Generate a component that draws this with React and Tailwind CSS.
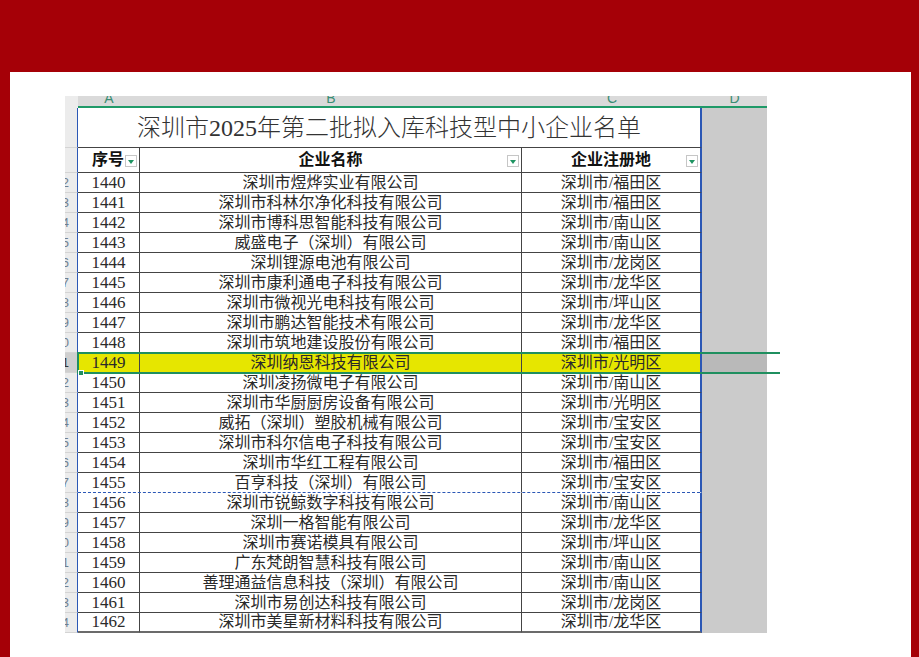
import React from 'react';

const rows = [
  [1440, '深圳市煜烨实业有限公司', '深圳市/福田区'],
  [1441, '深圳市科林尔净化科技有限公司', '深圳市/福田区'],
  [1442, '深圳市博科思智能科技有限公司', '深圳市/南山区'],
  [1443, '威盛电子（深圳）有限公司', '深圳市/南山区'],
  [1444, '深圳锂源电池有限公司', '深圳市/龙岗区'],
  [1445, '深圳市康利通电子科技有限公司', '深圳市/龙华区'],
  [1446, '深圳市微视光电科技有限公司', '深圳市/坪山区'],
  [1447, '深圳市鹏达智能技术有限公司', '深圳市/龙华区'],
  [1448, '深圳市筑地建设股份有限公司', '深圳市/福田区'],
  [1449, '深圳纳恩科技有限公司', '深圳市/光明区'],
  [1450, '深圳凌扬微电子有限公司', '深圳市/南山区'],
  [1451, '深圳市华厨厨房设备有限公司', '深圳市/光明区'],
  [1452, '威拓（深圳）塑胶机械有限公司', '深圳市/宝安区'],
  [1453, '深圳市科尔信电子科技有限公司', '深圳市/宝安区'],
  [1454, '深圳市华红工程有限公司', '深圳市/福田区'],
  [1455, '百亨科技（深圳）有限公司', '深圳市/宝安区'],
  [1456, '深圳市锐鲸数字科技有限公司', '深圳市/南山区'],
  [1457, '深圳一格智能有限公司', '深圳市/龙华区'],
  [1458, '深圳市赛诺模具有限公司', '深圳市/坪山区'],
  [1459, '广东梵朗智慧科技有限公司', '深圳市/南山区'],
  [1460, '善理通益信息科技（深圳）有限公司', '深圳市/南山区'],
  [1461, '深圳市易创达科技有限公司', '深圳市/龙岗区'],
  [1462, '深圳市美星新材料科技有限公司', '深圳市/龙华区'],
];

const Filter = () => (
  <span className="absolute right-[2px] bottom-[5px] w-[12px] h-[12px] border border-[#c6c6c6] bg-white flex items-end justify-center pb-[2px]">
    <svg width="6" height="4" viewBox="0 0 6 4">
      <path d="M0 0 L6 0 L3 4 Z" fill="#1e9462" />
    </svg>
  </span>
);

const RowNum = ({ n, active }) => (
  <div
    className={`w-[13px] shrink-0 overflow-hidden border-r border-r-[#2b57b5] border-b border-b-[#d4d4d4] flex items-center justify-end pr-[8px] text-[13px] leading-none font-['Liberation_Sans',sans-serif] ${
      active ? 'bg-[#cfcfcf] text-[#333]' : 'bg-[#ececec] text-[#6f7f91]'
    }`}
  >
    <span className="whitespace-nowrap">{n}</span>
  </div>
);

export default function App() {
  return (
    <div className="w-[919px] h-[657px] bg-[#a50007] pt-[72px] pl-[10px] pr-[8px]">
      <div className="h-full bg-white pt-[24px] pl-[55px]">
        <div className="relative w-[702px] font-['Liberation_Serif','Noto_Sans_CJK_SC',serif] text-[#2a2a2a]">
          {/* column letters, clipped by the frozen view */}
          <div className="flex h-[10px]">
            <div className="w-[13px] bg-[#ececec]" />
            <div className="flex bg-[#dadada] overflow-hidden text-[14px] leading-[14px] text-[#3a8d74] font-['Liberation_Sans',sans-serif]">
              <div className="w-[62px] text-center -mt-[5px]">A</div>
              <div className="w-[382px] text-center -mt-[5px]">B</div>
              <div className="w-[180px] text-center -mt-[5px]">C</div>
              <div className="w-[65px] text-center -mt-[5px]">D</div>
            </div>
          </div>
          <div className="flex h-[2px]">
            <div className="w-[13px] bg-[#ececec]" />
            <div className="w-[689px] bg-[#1f9a68]" />
          </div>

          {/* title */}
          <div className="flex h-[40px]">
            <div className="w-[13px] bg-[#ececec] border-r border-r-[#2b57b5] border-b border-b-[#d4d4d4]" />
            <div className="w-[624px] border-r-2 border-r-[#2b57b5] border-b border-b-[#444] flex items-center justify-center text-[24px] font-light text-[#333]">
              深圳市2025年第二批拟入库科技型中小企业名单
            </div>
            <div className="w-[65px] bg-[#cbcbcb]" />
          </div>

          {/* header */}
          <div className="flex h-[25px] font-['Liberation_Sans','Noto_Sans_CJK_SC',sans-serif] font-bold text-[16px] text-[#111]">
            <div className="w-[13px] bg-[#ececec] border-r border-r-[#2b57b5] border-b border-b-[#d4d4d4]" />
            <div className="relative w-[62px] border-r border-r-[#444] border-b border-b-[#444] flex items-center pl-[14px]">
              序号
              <Filter />
            </div>
            <div className="relative w-[382px] border-r border-r-[#444] border-b border-b-[#444] flex items-center justify-center">
              企业名称
              <Filter />
            </div>
            <div className="relative w-[180px] border-r-2 border-r-[#2b57b5] border-b border-b-[#444] flex items-center justify-center">
              企业注册地
              <Filter />
            </div>
            <div className="w-[65px] bg-[#cbcbcb]" />
          </div>

          {/* data */}
          {rows.map(([no, name, place]) => {
            const active = no === 1449;
            const dashed = no === 1455;
            const last = no === 1462;
            const bottom = dashed
              ? 'border-b border-b-transparent'
              : last
              ? 'border-b-2 border-b-[#6b6b6b]'
              : 'border-b border-b-[#444]';
            const fill = active ? 'bg-[#e6e600]' : 'bg-white';
            return (
              <div key={no} className="flex h-[20px] text-[16px] leading-[20px]">
                <RowNum n={no - 1408} active={active} />
                <div className={`w-[62px] border-r border-r-[#444] ${bottom} ${fill} flex items-center justify-center text-[17px]`}>
                  {no}
                </div>
                <div className={`w-[382px] border-r border-r-[#444] ${bottom} ${fill} flex items-center justify-center whitespace-nowrap`}>
                  {name}
                </div>
                <div className={`w-[180px] border-r-2 border-r-[#2b57b5] ${bottom} ${fill} flex items-center justify-center whitespace-nowrap`}>
                  {place}
                </div>
                <div className={`w-[65px] ${active ? 'bg-[#b9b9b9]' : 'bg-[#cbcbcb]'}`} />
              </div>
            );
          })}

          {/* page break */}
          <div className="absolute left-[13px] top-[396px] w-[622px] border-t border-dashed border-[#2b57b5]" />

          {/* selection */}
          <div className="absolute left-[12px] top-[256px] w-[703px] h-[22px] border-2 border-r-0 border-[#1f8f5f] pointer-events-none" />
          <div className="absolute left-[13px] top-[274px] w-[6px] h-[6px] bg-[#1f8f5f] border border-white" />
        </div>
      </div>
    </div>
  );
}
